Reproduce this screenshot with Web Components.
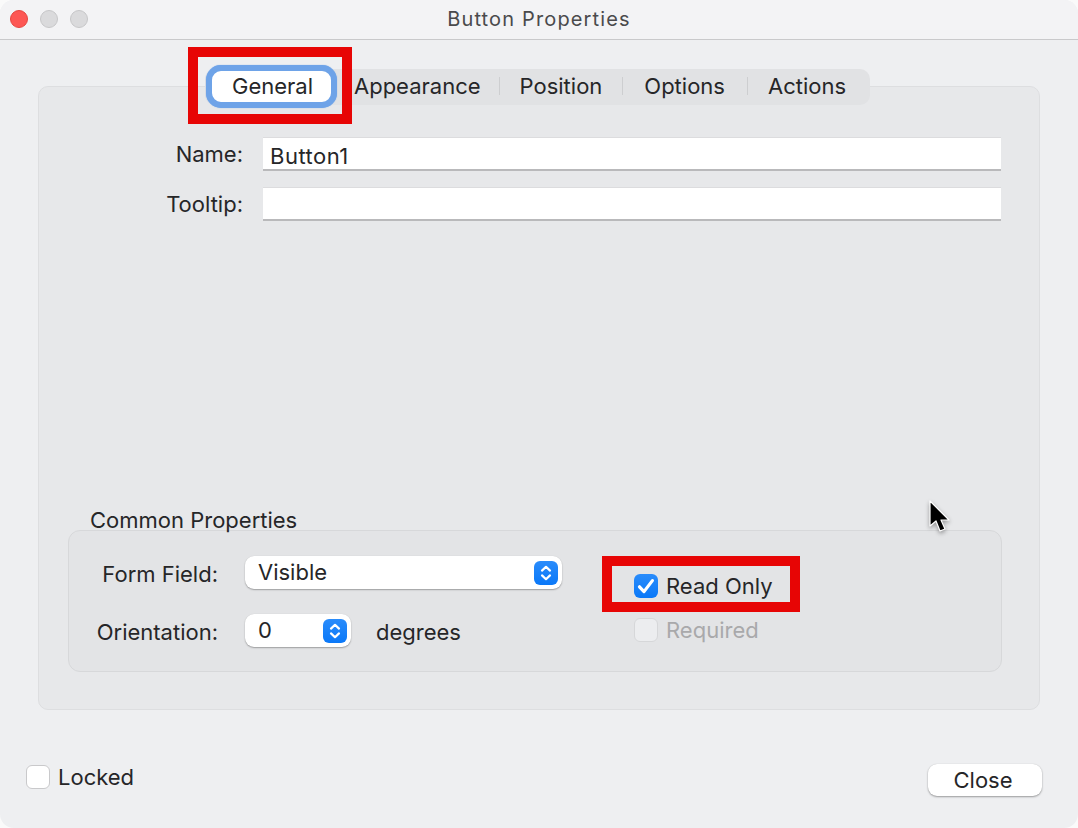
<!DOCTYPE html>
<html>
<head>
<meta charset="utf-8">
<style>
  html, body { margin: 0; padding: 0; background: #fafafa; }
  body { font: 22px Inter, "Liberation Sans", sans-serif; color: #262628; width: 1078px; height: 828px; overflow: hidden; }
</style>
</head>
<body>
<mac-window title="Button Properties">
  <mac-tabs slot="tabs" items="General,Appearance,Position,Options,Actions"></mac-tabs>
  <mac-field label="Name:" value="Button1"></mac-field>
  <mac-field label="Tooltip:" value=""></mac-field>
  <mac-group slot="group" heading="Common Properties">
    <div style="display:grid;grid-template-columns:149px 106px 184px;column-gap:27px;row-gap:25px;align-items:center;justify-content:start">
      <span style="text-align:right;position:relative;top:1px">Form Field:</span>
      <mac-select value="Visible" style="grid-column:span 2"></mac-select>
      <span style="text-align:right;position:relative;top:1px">Orientation:</span>
      <mac-select value="0"></mac-select>
      <span style="position:relative;top:1px;margin-left:-2px">degrees</span>
    </div>
    <div style="display:flex;flex-direction:column;gap:18px;padding-top:17px;margin-left:72px">
      <mac-check checked>Read Only</mac-check>
      <mac-check disabled>Required</mac-check>
    </div>
  </mac-group>
  <mac-check slot="footer-left">Locked</mac-check>
  <mac-button slot="footer-right">Close</mac-button>
</mac-window>
<mark-box style="left:188px;top:47px;width:164px;height:77px"></mark-box>
<mark-box style="left:602px;top:556px;width:198px;height:56px"></mark-box>
<mouse-pointer style="left:929px;top:500px"></mouse-pointer>

<script>
const chevrons = `
  <div class="chev">
    <svg width="24" height="24" viewBox="0 0 24 24">
      <path d="M8 9.6 12 5.8 16 9.6M8 14.4 12 18.2 16 14.4" fill="none" stroke="#fff" stroke-width="2.2" stroke-linecap="round" stroke-linejoin="round"/>
    </svg>
  </div>`;

class MacWindow extends HTMLElement {
  constructor() {
    super();
    this.attachShadow({mode: 'open'});
    this.shadowRoot.innerHTML = `
      <style>
        :host { display: flex; flex-direction: column; box-sizing: border-box; width: 1078px; height: 828px; background: #eeeff1; border-radius: 14px; overflow: hidden; }
        .bar { flex: none; height: 39px; display: flex; align-items: center; justify-content: center; position: relative; background: #f3f3f5; border-bottom: 1px solid #c9c9cb; font-size: 20px; letter-spacing: 1.15px; color: #4a4a4c; }
        .bar span { position: relative; top: -1px; }
        .lights { position: absolute; left: 10px; top: 10px; display: flex; gap: 12px; }
        .lights i { display: block; box-sizing: border-box; width: 18px; height: 18px; border-radius: 50%; background: #dadadc; border: 1px solid #c6c6c8; }
        .lights i:first-child { background: #fd5754; border-color: #e5453f; }
        .panel { flex: none; box-sizing: border-box; height: 624px; margin: 46px 38px 0; background: #e7e8ea; border: 1px solid #dddee0; border-radius: 10px; display: flex; flex-direction: column; }
        .tabs { display: block; margin: -18px 0 0 166px; }
        .fields { display: flex; flex-direction: column; gap: 16px; margin-top: 32px; padding-right: 38px; }
        .group { margin: auto 37px 37px 29px; }
        .foot { flex: 1; display: flex; justify-content: space-between; align-items: flex-start; padding: 54px 36px 0 26px; }
      </style>
      <div class="bar">
        <div class="lights"><i></i><i></i><i></i></div>
        <span id="title"></span>
      </div>
      <div class="panel">
        <div class="tabs"><slot name="tabs"></slot></div>
        <div class="fields"><slot></slot></div>
        <div class="group"><slot name="group"></slot></div>
      </div>
      <div class="foot"><slot name="footer-left"></slot><slot name="footer-right"></slot></div>`;
    this.shadowRoot.getElementById('title').textContent = this.getAttribute('title');
  }
}

class MacTabs extends HTMLElement {
  constructor() {
    super();
    this.attachShadow({mode: 'open'});
    const items = this.getAttribute('items').split(',');
    this.shadowRoot.innerHTML = `
      <style>
        :host { display: inline-flex; align-items: center; box-sizing: border-box; height: 36px; padding: 0 4px 2px 0; background: #e1e2e4; border-radius: 10px; }
        .tab { display: flex; align-items: center; padding: 0 20px 0 21px; position: relative; height: 22px; }
        .tab + .tab::before { content: ""; position: absolute; left: 0; top: 2px; bottom: 2px; width: 1px; background: #cdced0; }
        .tab.second::before { display: none; }
        .tab.second { padding: 0 18px 0 17px; }
        .tab.wide { padding: 0 22px; }
        .on { box-sizing: border-box; width: 131px; height: 43px; margin-left: 1px; padding-left: 2px; display: flex; align-items: center; justify-content: center; background: #fff; border: 6px solid #6ea3e8; border-radius: 15px; box-shadow: 0 0 1px #6ea3e8; }
      </style>`;
    items.forEach((name, i) => {
      const el = document.createElement('div');
      el.className = i == 0 ? 'on' : (i == 1 ? 'tab second' : (i == 3 ? 'tab wide' : 'tab'));
      el.textContent = name;
      this.shadowRoot.appendChild(el);
    });
  }
}

class MacField extends HTMLElement {
  constructor() {
    super();
    this.attachShadow({mode: 'open'});
    this.shadowRoot.innerHTML = `
      <style>
        :host { display: flex; align-items: center; gap: 20px; }
        .label { width: 204px; text-align: right; }
        .input { flex: 1; box-sizing: border-box; height: 34px; line-height: 34px; padding: 1px 0 0 7px; letter-spacing: .5px; background: #fff; border-top: 1px solid #dcdcde; border-bottom: 2px solid #b9b9bb; }
      </style>
      <span class="label">${this.getAttribute('label')}</span>
      <div class="input">${this.getAttribute('value')}</div>`;
  }
}

class MacGroup extends HTMLElement {
  constructor() {
    super();
    this.attachShadow({mode: 'open'});
    this.shadowRoot.innerHTML = `
      <style>
        :host { display: block; }
        .head { box-sizing: border-box; height: 27px; padding: 7px 0 0 22px; line-height: 20px; }
        .box { box-sizing: border-box; height: 142px; display: flex; align-items: flex-start; padding: 25px 0 0 0; background: #e3e4e6; border: 1px solid #d7d8da; border-radius: 12px; }
      </style>
      <div class="head">${this.getAttribute('heading')}</div>
      <div class="box"><slot></slot></div>`;
  }
}

class MacSelect extends HTMLElement {
  constructor() {
    super();
    this.attachShadow({mode: 'open'});
    this.shadowRoot.innerHTML = `
      <style>
        :host { display: flex; align-items: center; justify-content: space-between; box-sizing: border-box; height: 33px; padding: 0 4px 0 13px; background: #fff; border-radius: 9px; box-shadow: 0 1px 1.5px rgba(0,0,0,.3), 0 0 1px rgba(0,0,0,.1); }
        span { position: relative; top: -1px; }
        .chev { width: 24px; height: 24px; border-radius: 6px; background: linear-gradient(#2a8cfb, #0a78f8); }
        svg { display: block; }
      </style>
      <span>${this.getAttribute('value')}</span>${chevrons}`;
  }
}

class MacCheck extends HTMLElement {
  constructor() {
    super();
    this.attachShadow({mode: 'open'});
    this.shadowRoot.innerHTML = `
      <style>
        :host { display: flex; align-items: center; gap: 8px; }
        .box { flex: none; box-sizing: border-box; width: 24px; height: 24px; border-radius: 6px; background: #fff; border: 1px solid #c9c9cb; }
        .box svg { display: block; }
        :host([checked]) .box { background: linear-gradient(#2a8cfb, #0a78f8); border: none; }
        :host([disabled]) { color: #a9a9ab; }
        :host([disabled]) .box { background: #ecedef; border-color: #d6d7d9; }
      </style>
      <div class="box">${this.hasAttribute('checked') ? '<svg width="24" height="24" viewBox="0 0 24 24"><path d="M5.5 12.8 10 17.6 18.4 6.6" fill="none" stroke="#fff" stroke-width="3.2" stroke-linecap="round" stroke-linejoin="round"/></svg>' : ''}</div>
      <span><slot></slot></span>`;
  }
}

class MacButton extends HTMLElement {
  constructor() {
    super();
    this.attachShadow({mode: 'open'});
    this.shadowRoot.innerHTML = `
      <style>
        :host { display: flex; align-items: center; justify-content: center; box-sizing: border-box; width: 114px; height: 32px; padding-right: 4px; background: #fff; border-radius: 9px; box-shadow: 0 1px 2px rgba(0,0,0,.35), 0 0 1px rgba(0,0,0,.15); }
      </style>
      <slot></slot>`;
  }
}

class MarkBox extends HTMLElement {
  constructor() {
    super();
    this.attachShadow({mode: 'open'});
    this.shadowRoot.innerHTML = `
      <style>
        :host { display: block; position: absolute; box-sizing: border-box; border: 10px solid #e70505; }
      </style>`;
  }
}

class MousePointer extends HTMLElement {
  constructor() {
    super();
    this.attachShadow({mode: 'open'});
    this.shadowRoot.innerHTML = `
      <style>
        :host { display: block; position: absolute; width: 24px; height: 36px; }
        svg { display: block; filter: drop-shadow(0 2px 2px rgba(0,0,0,.35)); }
      </style>
      <svg width="24" height="36" viewBox="0 0 24 36">
        <path d="M1 1V26L7 21L11 31L16 29L12 20H20Z" fill="#000" stroke="#fff" stroke-width="1.2" stroke-linejoin="round"/>
      </svg>`;
  }
}

customElements.define('mac-window', MacWindow);
customElements.define('mac-tabs', MacTabs);
customElements.define('mac-field', MacField);
customElements.define('mac-group', MacGroup);
customElements.define('mac-select', MacSelect);
customElements.define('mac-check', MacCheck);
customElements.define('mac-button', MacButton);
customElements.define('mark-box', MarkBox);
customElements.define('mouse-pointer', MousePointer);
</script>
</body>
</html>
